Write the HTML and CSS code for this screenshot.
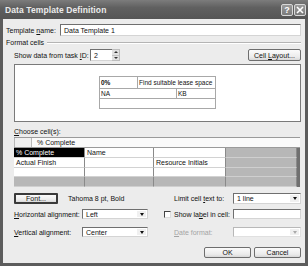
FILE: index.html
```html
<!DOCTYPE html>
<html lang="en">
<head>
  <meta charset="UTF-8">
  <title>Data Template Definition</title>
  <link rel="stylesheet" href="styles.css">
</head>
<body>
  <div class="window">
    <div class="titlebar">
      <span class="title">Data Template Definition</span>
      <div class="title-buttons">
        <span class="tbtn">?</span>
        <span class="tbtn">
          <svg width="8" height="8" viewBox="0 0 8 8"><path d="M1 1L7 7M7 1L1 7" stroke="#fff" stroke-width="1.6"/></svg>
        </span>
      </div>
    </div>

    <div class="dialog">
      <div class="row row-name">
        <label class="lbl-name">Template <u>n</u>ame:</label>
        <div class="field grow">Data Template 1</div>
      </div>

      <div class="row group-head">
        <span>Format cells</span>
        <span class="rule"></span>
      </div>

      <div class="group">
        <div class="row row-task">
          <label class="lbl-task">Show data from task <u>I</u>D:</label>
          <div class="spin">
            <div class="field spin-value">2</div>
            <div class="spin-btns">
              <span class="spin-btn"><i class="tri-up"></i></span>
              <span class="spin-btn"><i class="tri-down"></i></span>
            </div>
          </div>
          <span class="grow"></span>
          <button class="btn btn-layout">Cell <u>L</u>ayout...</button>
        </div>

        <div class="preview">
          <table class="sample">
            <tr><td class="b c1">0%</td><td colspan="2">Find suitable lease space</td></tr>
            <tr><td colspan="2">NA</td><td class="c3">KB</td></tr>
            <tr><td colspan="3">&nbsp;</td></tr>
          </table>
        </div>

        <div class="row row-choose"><u>C</u>hoose cell(s):</div>

        <div class="cells">
          <div class="edit-bar">
            <span class="edit-corner"></span>
            <span class="edit-text">% Complete</span>
          </div>
          <div class="cell-grid">
            <div class="cell sel">% Complete</div>
            <div class="cell">Name</div>
            <div class="cell"></div>
            <div class="cell off"></div>
            <div class="cell edge"></div>

            <div class="cell">Actual Finish</div>
            <div class="cell"></div>
            <div class="cell">Resource Initials</div>
            <div class="cell off"></div>
            <div class="cell edge"></div>

            <div class="cell"></div>
            <div class="cell"></div>
            <div class="cell"></div>
            <div class="cell off"></div>
            <div class="cell edge"></div>

            <div class="cell off"></div>
            <div class="cell off"></div>
            <div class="cell off"></div>
            <div class="cell off"></div>
            <div class="cell edge"></div>
          </div>
        </div>

        <div class="row row-font">
          <div class="left">
            <button class="btn btn-font">Font...</button>
            <span class="font-name">Tahoma 8 pt, Bold</span>
          </div>
          <div class="right">
            <span class="slot"></span>
            <label class="lbl-right">Limit cell <u>t</u>ext to:</label>
            <div class="select"><span class="value">1 line</span><span class="arrow"><i class="tri-down"></i></span></div>
          </div>
        </div>

        <div class="row row-halign">
          <div class="left">
            <label class="lbl-left"><u>H</u>orizontal alignment:</label>
            <div class="select narrow"><span class="value">Left</span><span class="arrow"><i class="tri-down"></i></span></div>
          </div>
          <div class="right">
            <span class="slot"><span class="check"></span></span>
            <label class="lbl-right">Show la<u>b</u>el in cell:</label>
            <div class="field wide"></div>
          </div>
        </div>

        <div class="row row-valign">
          <div class="left">
            <label class="lbl-left"><u>V</u>ertical alignment:</label>
            <div class="select narrow"><span class="value">Center</span><span class="arrow"><i class="tri-down"></i></span></div>
          </div>
          <div class="right">
            <span class="slot"></span>
            <label class="lbl-right disabled"><u>D</u>ate format:</label>
            <div class="select disabled-select"><span class="value"></span><span class="arrow"><i class="tri-down"></i></span></div>
          </div>
        </div>
      </div>

      <div class="row row-actions">
        <button class="btn btn-action">OK</button>
        <button class="btn btn-action">Cancel</button>
      </div>
    </div>
  </div>
</body>
</html>
```

FILE: styles.css
```css
* {
  box-sizing: border-box;
}

html,
body {
  margin: 0;
  padding: 0;
  background: #4a4a4a;
}

body {
  font-family: "Liberation Sans", Arial, sans-serif;
  font-size: 7px;
  color: #111;
}

u {
  text-decoration: underline;
}

.window {
  width: 308px;
  height: 266px;
  background: #5c5c5c;
  padding: 0 3px 3px 3px;
  display: flex;
  flex-direction: column;
}

.titlebar {
  height: 19px;
  margin: 0 -3px;
  padding: 0 2px 0 5px;
  display: flex;
  align-items: center;
  background: linear-gradient(#7c7c7c, #606060 40%, #555 100%);
}

.title {
  flex: 1;
  color: #ececec;
  font-weight: bold;
  font-size: 8.5px;
  letter-spacing: 0.1px;
}

.title-buttons {
  display: flex;
  gap: 1px;
}

.tbtn {
  width: 12px;
  height: 12px;
  border: 1px solid #d8d8d8;
  border-radius: 2px;
  background: linear-gradient(#9a9a9a, #7a7a7a);
  color: #fff;
  font-weight: bold;
  font-size: 9px;
  display: flex;
  align-items: center;
  justify-content: center;
}

.dialog {
  flex: 1;
  background: #ececec;
  padding: 5px 4px 0 3px;
  display: flex;
  flex-direction: column;
}

.row {
  display: flex;
  align-items: center;
}

.grow {
  flex: 1;
}

.field {
  height: 100%;
  background: #fff;
  border: 1px solid;
  border-color: #6f6f6f #d4d4d4 #d4d4d4 #6f6f6f;
  padding-left: 3px;
  display: flex;
  align-items: center;
  white-space: nowrap;
}

.row-name {
  height: 12px;
}

.lbl-name {
  width: 54px;
}

.group-head {
  height: 10px;
  margin-top: 1px;
  gap: 3px;
}

.group-head .rule {
  flex: 1;
  height: 1px;
  background: #b4b4b4;
  box-shadow: 0 1px 0 #fff;
}

.group {
  padding-left: 8px;
}

.row-task {
  height: 12px;
  margin-top: 2px;
}

.lbl-task {
  width: 76px;
}

.spin {
  width: 30px;
  height: 100%;
  display: flex;
}

.spin-value {
  flex: 1;
  border-right: none;
}

.spin-btns {
  width: 8px;
  display: flex;
  flex-direction: column;
  border: 1px solid #bdbdbd;
  border-left: none;
}

.spin-btn {
  flex: 1;
  background: #e2e2e2;
  display: flex;
  align-items: center;
  justify-content: center;
}

.spin-btn + .spin-btn {
  border-top: 1px solid #c4c4c4;
}

.tri-up,
.tri-down {
  width: 0;
  height: 0;
  border-left: 2px solid transparent;
  border-right: 2px solid transparent;
}

.tri-up {
  border-bottom: 2px solid #333;
}

.tri-down {
  border-top: 2px solid #333;
}

.btn {
  font: inherit;
  color: #111;
  height: 100%;
  padding: 0;
  background: linear-gradient(#fbfbfb, #ebebeb 70%, #d8d8d8);
  border: 1px solid #6e6e6e;
  border-radius: 2px;
}

.btn-layout {
  width: 53px;
}

.preview {
  height: 58px;
  margin-top: 3px;
  background: #fff;
  border: 1px solid #7a7a7a;
  display: flex;
  align-items: center;
  justify-content: center;
  padding-bottom: 2px;
}

.sample {
  width: 117px;
  border-collapse: collapse;
  font-size: 6.5px;
}

.sample td {
  height: 10px;
  border: 1px solid #a8a8a8;
  padding: 0 0 0 1px;
  white-space: nowrap;
}

.sample tr:first-child td {
  height: 12px;
}

.sample .c1 {
  width: 38px;
}

.sample .c3 {
  width: 39px;
}

.sample .b {
  font-weight: bold;
}

.row-choose {
  height: 10px;
  margin-top: 4px;
}

.cells {
  width: 286px;
  height: 50px;
  margin-top: 1px;
  border-top: 1px solid #9a9a9a;
  display: flex;
  flex-direction: column;
}

.edit-bar {
  height: 10px;
  display: flex;
  background: #fafafa;
  border-bottom: 1px solid #9a9a9a;
}

.edit-corner {
  width: 18px;
  border: 1px solid #b8b8b8;
  border-top: none;
  border-bottom: none;
  background: #f0f0f0;
}

.edit-text {
  padding-left: 5px;
  line-height: 9px;
}

.cell-grid {
  flex: 1;
  display: grid;
  grid-template-columns: 71px 69px 72px 71px 3px;
  grid-template-rows: repeat(4, 1fr);
}

.cell {
  background: #fff;
  border-right: 1px solid #8a8a8a;
  border-bottom: 1px solid #d2d2d2;
  padding-left: 2px;
  display: flex;
  align-items: center;
  white-space: nowrap;
  overflow: hidden;
}

.cell.sel {
  background: #000;
  color: #fff;
}

.cell.off {
  background: #b7b7b7;
  border-bottom-color: #cfcfcf;
}

.cell.edge {
  background: #707070;
  border: none;
}

.row-font {
  height: 11px;
  margin-top: 6px;
}

.row-halign {
  height: 10px;
  margin-top: 5px;
}

.row-valign {
  height: 10px;
  margin-top: 8px;
}

.left {
  width: 150px;
  height: 100%;
  display: flex;
  align-items: center;
}

.right {
  flex: 1;
  height: 100%;
  display: flex;
  align-items: center;
}

.btn-font {
  width: 44px;
  border: 2px solid #3a3a3a;
  border-radius: 1px;
}

.font-name {
  margin-left: 10px;
}

.slot {
  width: 10px;
  display: flex;
  align-items: center;
}

.check {
  width: 7px;
  height: 7px;
  background: #fff;
  border: 1px solid;
  border-color: #444 #ddd #ddd #444;
}

.lbl-left {
  width: 68px;
}

.lbl-right {
  width: 59px;
}

.disabled {
  color: #a4a4a4;
}

.select {
  width: 68px;
  height: 100%;
  background: #fff;
  border: 1px solid;
  border-color: #6f6f6f #d4d4d4 #d4d4d4 #6f6f6f;
  display: flex;
  align-items: stretch;
}

.select.narrow {
  width: 66px;
}

.select .value {
  flex: 1;
  padding-left: 3px;
  display: flex;
  align-items: center;
}

.select .arrow {
  width: 9px;
  margin: 1px;
  background: #f0f0f0;
  display: flex;
  align-items: center;
  justify-content: center;
}

.select .tri-down {
  border-left-width: 2.5px;
  border-right-width: 2.5px;
  border-top: 3px solid #111;
}

.disabled-select {
  border-color: #b8b8b8 #e0e0e0 #e0e0e0 #b8b8b8;
}

.disabled-select .tri-down {
  border-top-color: #aaa;
}

.field.wide {
  width: 68px;
}

.row-actions {
  height: 11px;
  margin-top: 10px;
  justify-content: flex-end;
  gap: 3px;
}

.btn-action {
  width: 47px;
}
```
